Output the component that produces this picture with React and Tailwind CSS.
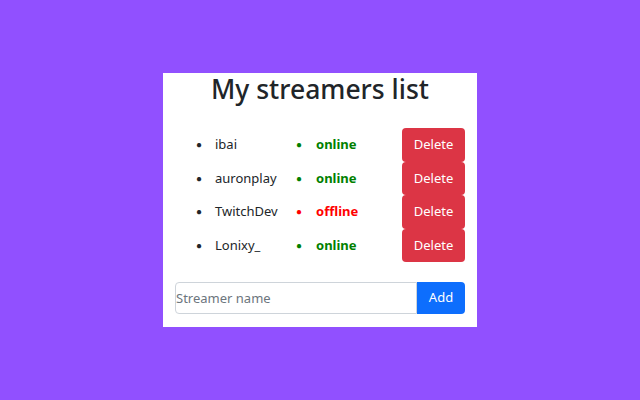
import React, { useState } from "react";

const initialStreamers = [
  { name: "ibai", online: true },
  { name: "auronplay", online: true },
  { name: "TwitchDev", online: false },
  { name: "Lonixy_", online: true },
];

const App = () => {
  const [streamers, setStreamers] = useState(initialStreamers);
  const [name, setName] = useState("");

  const handleAdd = () => {
    if (!name.trim()) return;
    setStreamers([...streamers, { name: name.trim(), online: false }]);
    setName("");
  };

  return (
    <div className="w-[640px] h-[400px] bg-[#9150ff] flex items-center justify-center font-['Noto_Sans',sans-serif]">
      <div className="w-[314px] bg-white px-3 pb-[13px]">
        <h1 className="text-center text-[26.5px] leading-[32px] font-medium text-[#212529]">
          My streamers list
        </h1>

        {/* Streamers */}
        <div className="mt-[23px] flex flex-col">
          {streamers.map((s, i) => (
            <div key={s.name + i} className="flex items-center h-[33.5px]">
              <div className="flex items-center w-[121px] pl-[21px] text-[13px] text-[#212529]">
                <span className="w-[19px] text-[10px]">●</span>
                <span>{s.name}</span>
              </div>
              <div
                className={
                  "flex items-center w-[106px] text-[13px] font-bold " +
                  (s.online ? "text-[#008000]" : "text-[#ff0000]")
                }
              >
                <span className="w-[20px] text-[10px] font-normal">●</span>
                <span>{s.online ? "online" : "offline"}</span>
              </div>
              <button
                onClick={() => setStreamers(streamers.filter((_, j) => j !== i))}
                className="w-[63px] h-full bg-[#dc3545] text-white text-[13px] rounded-[4px]"
              >
                Delete
              </button>
            </div>
          ))}
        </div>

        {/* Add form */}
        <div className="mt-5 flex">
          <input
            value={name}
            onChange={(e) => setName(e.target.value)}
            placeholder="Streamer name"
            className="w-[242px] h-[32px] border border-[#ced4da] rounded-l-[4px] text-[13px] px-0 outline-none placeholder:text-[#6c757d]"
          />
          <button
            onClick={handleAdd}
            className="w-[48px] h-[32px] bg-[#0d6efd] text-white text-[13px] rounded-r-[4px]"
          >
            Add
          </button>
        </div>
      </div>
    </div>
  );
};

export default App;
